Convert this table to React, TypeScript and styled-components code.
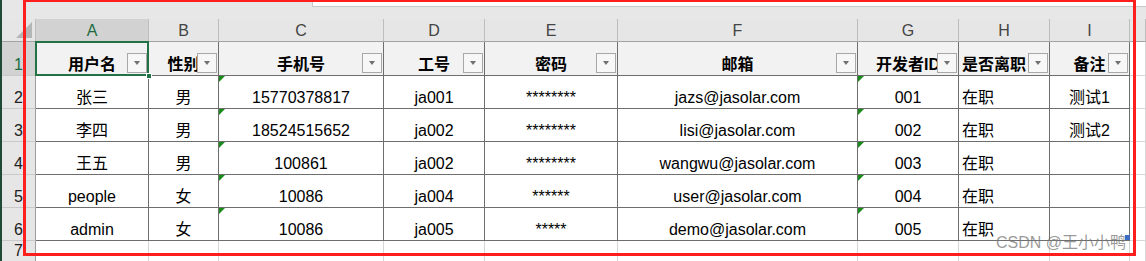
import React from 'react';
import styled, { createGlobalStyle, css } from 'styled-components';

const GlobalStyle = createGlobalStyle`
  html, body {
    margin: 0;
    padding: 0;
    background: #e6e6e6;
  }
  body {
    font-family: "Liberation Sans", "Noto Sans CJK SC", sans-serif;
  }
`;

type Align = 'left' | 'center';

interface IColumn {
  letter: string;
  title: string;
  align: Align;
  titleAlign?: Align;
  flagged?: boolean;
}

const columns: IColumn[] = [
  { letter: 'A', title: '用户名', align: 'center' },
  { letter: 'B', title: '性别', align: 'center' },
  { letter: 'C', title: '手机号', align: 'center', flagged: true },
  { letter: 'D', title: '工号', align: 'center' },
  { letter: 'E', title: '密码', align: 'center' },
  { letter: 'F', title: '邮箱', align: 'center' },
  { letter: 'G', title: '开发者ID', align: 'center', flagged: true },
  { letter: 'H', title: '是否离职', align: 'left', titleAlign: 'left' },
  { letter: 'I', title: '备注', align: 'center' },
];

const rows: string[][] = [
  ['张三', '男', '15770378817', 'ja001', '********', 'jazs@jasolar.com', '001', '在职', '测试1'],
  ['李四', '男', '18524515652', 'ja002', '********', 'lisi@jasolar.com', '002', '在职', '测试2'],
  ['王五', '男', '100861', 'ja002', '********', 'wangwu@jasolar.com', '003', '在职', ''],
  ['people', '女', '10086', 'ja004', '******', 'user@jasolar.com', '004', '在职', ''],
  ['admin', '女', '10086', 'ja005', '*****', 'demo@jasolar.com', '005', '在职', ''],
];

function App(): JSX.Element {
  return (
    <>
      <GlobalStyle />
      <Page>
        <TopStrip>
          <FormulaBox />
        </TopStrip>

        <Sheet>
          <Corner>
            <svg width="16" height="16" viewBox="0 0 16 16">
              <polygon points="16,0 16,16 0,16" fill="#b5b5b5" />
            </svg>
          </Corner>
          {columns.map((col) => (
            <ColHead key={col.letter} $selected={col.letter === 'A'}>{col.letter}</ColHead>
          ))}
          <ColHead />

          {/* row 1: filter headers */}
          <RowHead $selected>1</RowHead>
          {columns.map((col, i) => (
            <Cell key={col.letter} $head $align={col.titleAlign || 'center'}>
              {col.title}
              <FilterButton><Arrow /></FilterButton>
              {i === 0 && (
                <Selection>
                  <FillHandle />
                </Selection>
              )}
            </Cell>
          ))}
          <Cell $light />

          {rows.map((row, r) => (
            <React.Fragment key={r}>
              <RowHead>{r + 2}</RowHead>
              {row.map((value, c) => (
                <Cell key={c} $align={columns[c].align}>
                  {columns[c].flagged && <Flag />}
                  {value}
                </Cell>
              ))}
              <Cell $light />
            </React.Fragment>
          ))}

          <RowHead>7</RowHead>
          {columns.map((col) => (
            <Cell key={col.letter} $light />
          ))}
          <Cell $light />
        </Sheet>

        <Watermark>CSDN @王小小鸭</Watermark>
        <QuickIcon />
        <RedFrame />
      </Page>
    </>
  );
}

export default App;

const Page = styled.div`
  position: relative;
  width: 1146px;
  height: 261px;
  overflow: hidden;
  box-sizing: border-box;
  border-left: 2px solid #1f4b34;
  background: #e7e7e7;
`;

const TopStrip = styled.div`
  height: 19px;
  display: flex;
  align-items: flex-start;
  padding-left: 310px;
  box-sizing: border-box;
`;

const FormulaBox = styled.div`
  flex: 1;
  height: 7px;
  background: #ffffff;
  border-left: 1px solid #c8c8c8;
  border-bottom: 1px solid #c8c8c8;
  box-sizing: border-box;
`;

const Sheet = styled.div`
  display: grid;
  grid-template-columns: 34px 113px 70px 165px 101px 133px 240px 101px 91px 80px 1fr;
  grid-template-rows: 23px 34px repeat(5, 33px) 21px;
`;

const Corner = styled.div`
  display: flex;
  align-items: flex-end;
  justify-content: flex-end;
  padding: 0 3px 3px 0;
  box-sizing: border-box;
  background: #e6e6e6;
  border-right: 1px solid #bdbdbd;
  border-bottom: 1px solid #a3a3a3;
`;

const ColHead = styled.div<{ $selected?: boolean }>`
  display: flex;
  align-items: center;
  justify-content: center;
  padding-top: 2px;
  box-sizing: border-box;
  background: #e6e6e6;
  color: #444444;
  font-size: 16px;
  border-right: 1px solid #bdbdbd;
  border-bottom: 1px solid #a3a3a3;

  ${({ $selected }) => $selected && css`
    background: #d2d2d2;
    color: #1e6b41;
  `}
`;

const RowHead = styled.div<{ $selected?: boolean }>`
  display: flex;
  align-items: flex-end;
  justify-content: center;
  box-sizing: border-box;
  background: #e6e6e6;
  color: #222222;
  font-size: 16px;
  line-height: 20px;
  border-right: 1px solid #9e9e9e;
  border-bottom: 1px solid #c9c9c9;

  ${({ $selected }) => $selected && css`
    background: #d2d2d2;
    color: #1e6b41;
  `}
`;

const Cell = styled.div<{ $align?: Align; $head?: boolean; $light?: boolean }>`
  position: relative;
  display: flex;
  align-items: flex-end;
  justify-content: ${({ $align }) => ($align === 'left' ? 'flex-start' : 'center')};
  padding: 0 3px;
  box-sizing: border-box;
  white-space: nowrap;
  font-size: 16px;
  line-height: 20px;
  color: #000000;
  background: ${({ $head }) => ($head ? '#f2f2f2' : '#ffffff')};
  font-weight: ${({ $head }) => ($head ? 700 : 400)};
  border-right: 1px solid ${({ $light }) => ($light ? '#d6d6d6' : '#6e6e6e')};
  border-bottom: 1px solid ${({ $light }) => ($light ? '#d6d6d6' : '#6e6e6e')};
`;

const Flag = styled.span`
  position: absolute;
  top: 0;
  left: 0;
  width: 0;
  height: 0;
  border-top: 6px solid #1a8a1a;
  border-right: 6px solid transparent;
`;

const FilterButton = styled.span`
  position: absolute;
  right: 1px;
  bottom: 2px;
  width: 20px;
  height: 20px;
  display: flex;
  align-items: center;
  justify-content: center;
  box-sizing: border-box;
  border: 1px solid #a8a8a8;
  background: #f7f7f7;
`;

const Arrow = styled.span`
  width: 0;
  height: 0;
  border-left: 3.5px solid transparent;
  border-right: 3.5px solid transparent;
  border-top: 4px solid #707070;
`;

const Selection = styled.span`
  position: absolute;
  top: -1px;
  left: -1px;
  right: -1px;
  bottom: -1px;
  border: 2px solid #217346;
  z-index: 2;
  pointer-events: none;
`;

const FillHandle = styled.span`
  position: absolute;
  right: -5px;
  bottom: -5px;
  width: 6px;
  height: 6px;
  box-sizing: border-box;
  background: #217346;
  border: 1px solid #ffffff;
`;

const Watermark = styled.div`
  position: absolute;
  left: 994px;
  top: 233px;
  font-size: 16px;
  line-height: 20px;
  color: rgba(120, 120, 120, 0.75);
  white-space: nowrap;
  z-index: 3;
`;

const QuickIcon = styled.span`
  position: absolute;
  left: 1123px;
  top: 235px;
  width: 5px;
  height: 5px;
  background: #3d6cc0;
  z-index: 3;
`;

const RedFrame = styled.div`
  position: absolute;
  left: 21px;
  top: -1px;
  width: 1113px;
  height: 257px;
  box-sizing: border-box;
  border: 3px solid #ff1e1e;
  z-index: 5;
  pointer-events: none;
`;
